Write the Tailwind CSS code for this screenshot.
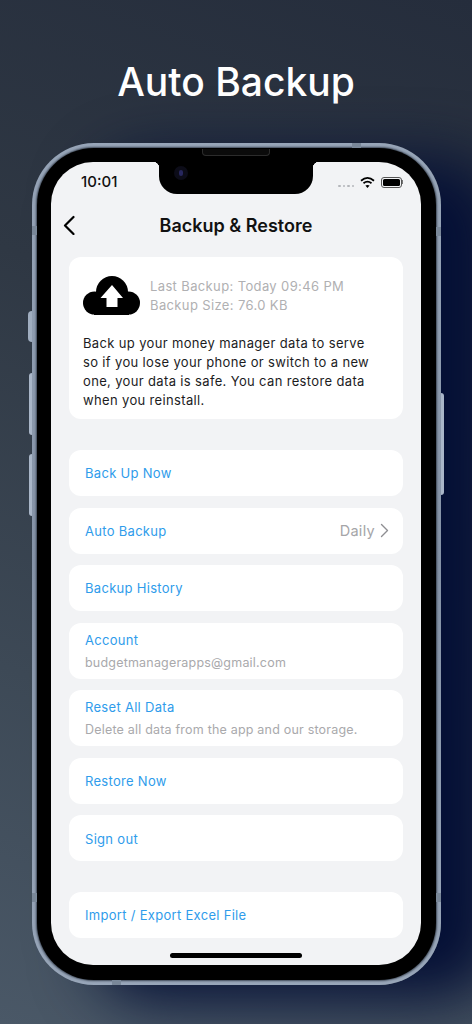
<!DOCTYPE html>
<html lang="en">
<head>
    <meta charset="UTF-8">
    <meta name="viewport" content="width=device-width, initial-scale=1.0">
    <title>Auto Backup</title>
    <script src="https://cdn.jsdelivr.net/npm/@tailwindcss/browser@4"></script>
</head>
<body class="w-[472px] h-[1024px] overflow-hidden font-['Inter',sans-serif] bg-[linear-gradient(20deg,#4a5867_0%,#3d4956_30%,#2f3844_65%,#252d3c_100%)]">

    <h1 class="pt-[57px] h-[143px] text-center text-white text-[39px] leading-[50px] font-medium">Auto Backup</h1>

    <!-- phone -->
    <div class="relative w-[409px] h-[842px] ml-[32px] rounded-[62px] p-[5px] bg-[linear-gradient(180deg,#97a5b8,#8492a6_50%,#98a6b9)] shadow-[60px_15px_60px_#051036]">
        <!-- side buttons -->
        <div class="absolute left-[-4px] top-[168px] w-[4px] h-[31px] rounded-l-sm bg-[#9fadbf]"></div>
        <div class="absolute left-[-3px] top-[230px] w-[3px] h-[62px] rounded-l-sm bg-[#a9b6c8]"></div>
        <div class="absolute left-[-3px] top-[311px] w-[3px] h-[62px] rounded-l-sm bg-[#a9b6c8]"></div>
        <div class="absolute right-[-3px] top-[250px] w-[3px] h-[102px] rounded-r-sm bg-[#a9b6c8]"></div>

        <!-- antenna bands -->
        <div class="absolute left-0 top-[83px] w-[5px] h-[9px] bg-[#7a8899]"></div>
        <div class="absolute right-0 top-[84px] w-[5px] h-[9px] bg-[#7a8899]"></div>
        <div class="absolute left-0 top-[750px] w-[5px] h-[9px] bg-[#7a8899]"></div>
        <div class="absolute right-0 top-[750px] w-[5px] h-[9px] bg-[#7a8899]"></div>
        <div class="absolute left-[320px] top-0 w-[9px] h-[5px] bg-[#7a8899]"></div>
        <div class="absolute left-[80px] bottom-0 w-[9px] h-[5px] bg-[#7a8899]"></div>

        <div class="h-full rounded-[57px] bg-black pt-[14px] pl-[14px] pr-[15px] pb-[15px] shadow-[0_0_2px_1px_#3c4654]">
            <div class="relative h-full rounded-[42px] overflow-hidden bg-[#f2f3f5]">

                <!-- notch -->
                <div class="absolute left-[108px] top-0 w-[154px] h-[32px] bg-black rounded-b-[18px]"></div>
                <div class="absolute left-[102px] top-0 size-[6px] bg-[radial-gradient(circle_at_0_100%,transparent_6px,#000_6.5px)]"></div>
                <div class="absolute left-[262px] top-0 size-[6px] bg-[radial-gradient(circle_at_100%_100%,transparent_6px,#000_6.5px)]"></div>
                <div class="absolute left-[123px] top-[4px] size-[14px] rounded-full bg-[#0c0c18] flex items-center justify-center">
                    <div class="w-[4px] h-[6px] rounded-full bg-[#27275e]"></div>
                </div>

                <!-- status bar -->
                <div class="flex items-center h-[40px] pl-[30px] pr-[18px]">
                    <span class="relative text-[15px] font-medium text-[#111]">10:01</span>
                    <div class="relative ml-auto flex items-center gap-[6px]">
                        <div class="flex gap-[2px] mt-[8px]">
                            <span class="size-[2.5px] rounded-full bg-[#b5b7bb]"></span>
                            <span class="size-[2.5px] rounded-full bg-[#b5b7bb]"></span>
                            <span class="size-[2.5px] rounded-full bg-[#b5b7bb]"></span>
                            <span class="size-[2.5px] rounded-full bg-[#b5b7bb]"></span>
                        </div>
                        <svg width="15" height="11" viewBox="0 0 15 11" fill="none" stroke="#000" stroke-width="1.8">
                            <path d="M1 3.7C5 .3 10 .3 14 3.7"/>
                            <path d="M3.5 6.2C6 4.2 9 4.2 11.5 6.2"/>
                            <path d="M7.5 11L5.4 8.6C6.7 7.7 8.3 7.7 9.6 8.6Z" fill="#000" stroke="none"/>
                        </svg>
                        <div class="flex items-center">
                            <div class="w-[21px] h-[11px] rounded-[3px] border border-[#555] p-[1px]">
                                <div class="h-full rounded-[1.5px] bg-black"></div>
                            </div>
                            <div class="w-[1px] h-[4px] bg-[#777]"></div>
                        </div>
                    </div>
                </div>

                <!-- header -->
                <div class="relative flex items-center justify-center h-[46px]">
                    <svg class="absolute left-[12px] top-[13px]" width="12" height="20" viewBox="0 0 12 20" fill="none" stroke="#000" stroke-width="2.2" stroke-linecap="round" stroke-linejoin="round">
                        <path d="M10.5 2L2 10.5L10.5 19"/>
                    </svg>
                    <h2 class="text-[18px] font-semibold text-[#111]">Backup &amp; Restore</h2>
                </div>

                <div class="px-[18px] mt-[9px]">
                    <!-- info card -->
                    <div class="h-[162px] rounded-[12px] bg-white pt-[19px] pl-[14px] pr-[30px]">
                        <div class="flex items-center gap-[10px]">
                            <svg class="shrink-0" width="57" height="39" viewBox="0 0 57 39" fill="#000">
                                <circle cx="29" cy="16" r="16"/>
                                <circle cx="11.5" cy="27" r="11.5"/>
                                <circle cx="45.5" cy="27" r="11.5"/>
                                <rect x="11" y="20" width="35" height="19"/>
                                <path d="M29 9L40 22H34.5V31H23.5V22H17.5Z" fill="#fff"/>
                            </svg>
                            <div class="text-[13px] leading-[19px] tracking-[0.37px] text-[#b0b0b2] whitespace-nowrap">
                                <p>Last Backup: Today 09:46 PM</p>
                                <p>Backup Size: 76.0 KB</p>
                            </div>
                        </div>
                        <p class="mt-[19px] text-[13px] leading-[19px] tracking-[0.35px] text-[#1c1c1e]">Back up your money manager data to serve so if you lose your phone or switch to a new one, your data is safe. You can restore data when you reinstall.</p>
                    </div>

                    <!-- rows -->
                    <div class="mt-[31px] flex flex-col gap-[11.5px]">
                        <div class="h-[46px] rounded-[12px] bg-white px-[16px] pt-[2px] flex items-center text-[13px] tracking-[0.3px] text-[#2f9ceb]">Back Up Now</div>
                        <div class="h-[46px] rounded-[12px] bg-white pl-[16px] pr-[14px] pt-[2px] flex items-center text-[13px] tracking-[0.3px] text-[#2f9ceb]">
                            Auto Backup
                            <span class="ml-auto mb-[2px] text-[14.5px] text-[#a5a5a8]">Daily</span>
                            <svg class="ml-[5px] mb-[2px]" width="9" height="15" viewBox="0 0 9 15" fill="none" stroke="#8e8e92" stroke-width="1.4" stroke-linecap="round" stroke-linejoin="round"><path d="M1.5 1.5L7.5 7.5L1.5 13.5"/></svg>
                        </div>
                        <div class="h-[46px] rounded-[12px] bg-white px-[16px] pt-[2px] flex items-center text-[13px] tracking-[0.3px] text-[#2f9ceb]">Backup History</div>
                        <div class="h-[56px] rounded-[12px] bg-white px-[16px] pt-[1px] flex flex-col justify-center gap-[6px]">
                            <p class="text-[13px] leading-[17px] tracking-[0.3px] text-[#2f9ceb]">Account</p>
                            <p class="text-[12.5px] leading-[16px] tracking-[0.2px] text-[#a9a9ac]">budgetmanagerapps@gmail.com</p>
                        </div>
                        <div class="h-[56px] rounded-[12px] bg-white px-[16px] pt-[1px] flex flex-col justify-center gap-[6px]">
                            <p class="text-[13px] leading-[17px] tracking-[0.3px] text-[#2f9ceb]">Reset All Data</p>
                            <p class="text-[12.5px] leading-[16px] tracking-[0.2px] text-[#a9a9ac]">Delete all data from the app and our storage.</p>
                        </div>
                        <div class="h-[46px] rounded-[12px] bg-white px-[16px] pt-[2px] flex items-center text-[13px] tracking-[0.3px] text-[#2f9ceb]">Restore Now</div>
                        <div class="h-[46px] rounded-[12px] bg-white px-[16px] pt-[3px] flex items-center text-[13px] tracking-[0.3px] text-[#2f9ceb]">Sign out</div>
                        <div class="mt-[19px] h-[46px] rounded-[12px] bg-white px-[16px] pt-[2px] flex items-center text-[13px] tracking-[0.3px] text-[#2f9ceb]">Import / Export Excel File</div>
                    </div>
                </div>

                <!-- home indicator -->
                <div class="absolute left-[119px] bottom-[7px] w-[132px] h-[5px] rounded-full bg-black"></div>
            </div>
        </div>

        <!-- speaker -->
        <div class="absolute left-[170px] top-[6px] w-[68px] h-[7px] rounded-b-[4px] bg-[#0b0b0b] border-x border-b border-[#2c2c2c]"></div>
    </div>
</body>
</html>
